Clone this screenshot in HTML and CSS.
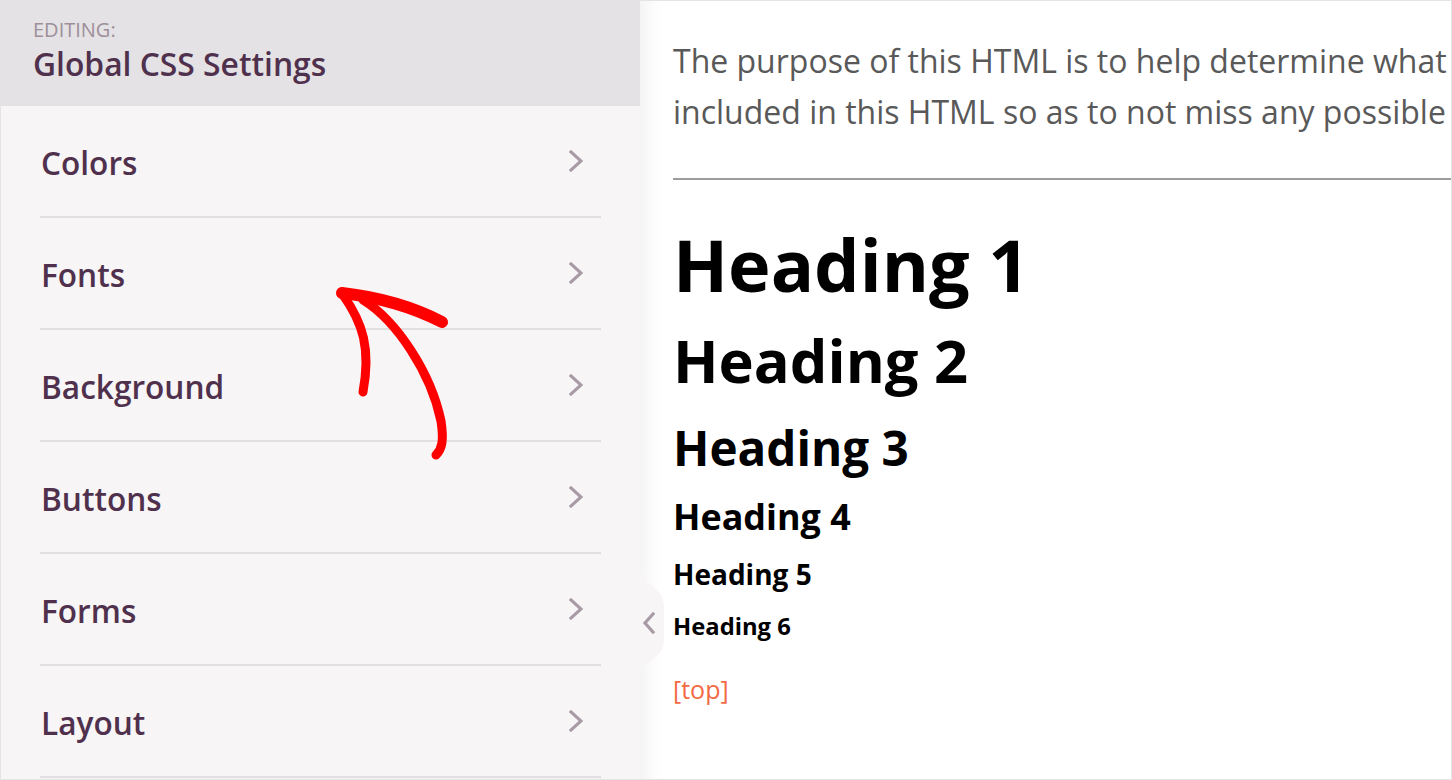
FILE: index.html
```html
<!DOCTYPE html>
<html>
<head>
<meta charset="utf-8">
<link rel="stylesheet" href="styles.css">
</head>
<body>
<div class="frame">
  <aside class="sidebar">
    <div class="sb-head">
      <div class="sb-label">EDITING:</div>
      <div class="sb-title">Global CSS Settings</div>
    </div>
    <ul class="menu">
      <li class="menu-item"><span>Colors</span><svg class="chev" viewBox="0 0 14 22"><polyline points="2,2 12,11 2,20"/></svg></li>
      <li class="menu-item"><span>Fonts</span><svg class="chev" viewBox="0 0 14 22"><polyline points="2,2 12,11 2,20"/></svg></li>
      <li class="menu-item"><span>Background</span><svg class="chev" viewBox="0 0 14 22"><polyline points="2,2 12,11 2,20"/></svg></li>
      <li class="menu-item"><span>Buttons</span><svg class="chev" viewBox="0 0 14 22"><polyline points="2,2 12,11 2,20"/></svg></li>
      <li class="menu-item"><span>Forms</span><svg class="chev" viewBox="0 0 14 22"><polyline points="2,2 12,11 2,20"/></svg></li>
      <li class="menu-item"><span>Layout</span><svg class="chev" viewBox="0 0 14 22"><polyline points="2,2 12,11 2,20"/></svg></li>
    </ul>
    <svg class="tab" viewBox="0 0 26 112">
      <path class="tab-bg" d="M0 0 C0 20 24 18 24 40 L24 72 C24 94 0 92 0 112 Z"/>
      <polyline class="tab-chev" points="13,47 5,56 13,65"/>
    </svg>
    <svg class="scribble" viewBox="0 0 640 780">
      <path class="s-thin" d="M342 294 C362 322 370 348 362 391"/>
      <path class="s-thick" d="M341 292 C376 296 410 305 441 321"/>
      <path class="s-thin" d="M362 299 C396 320 430 372 440 420 C443 440 441 448 435 454"/>
    </svg>
  </aside>
  <main class="content">
    <p class="intro">The purpose of this HTML is to help determine what default settings are with CSS<br>included in this HTML so as to not miss any possible Elements when designing a site.</p>
    <hr class="rule">
    <h1 class="h h1">Heading 1</h1>
    <h2 class="h h2">Heading 2</h2>
    <h3 class="h h3">Heading 3</h3>
    <h4 class="h h4">Heading 4</h4>
    <h5 class="h h5">Heading 5</h5>
    <h6 class="h h6">Heading 6</h6>
    <a class="toplink" href="#">[top]</a>
  </main>
</div>
</body>
</html>
```

FILE: styles.css
```css
* { box-sizing: border-box; }
html, body { margin: 0; padding: 0; }
body {
  width: 1452px;
  height: 780px;
  overflow: hidden;
  font-family: "Open Sans", "Noto Sans", sans-serif;
  background: #ffffff;
}
.frame {
  width: 1452px;
  height: 780px;
  display: flex;
  border: 1px solid #e4e4e4;
  overflow: hidden;
}
.sidebar {
  position: relative;
  width: 639px;
  flex: none;
  background: #f7f5f6;
  z-index: 2;
}
.sb-head {
  height: 105px;
  background: #e4e2e5;
  padding: 16px 0 0 32px;
}
.sb-label {
  font-size: 20px;
  line-height: 26px;
  color: #9e8f9a;
}
.sb-title {
  font-size: 31.8px;
  font-weight: 600;
  line-height: 42px;
  color: #50314d;
}
.menu {
  list-style: none;
  margin: 0;
  padding: 0 39px;
}
.menu-item {
  height: 112px;
  display: flex;
  align-items: center;
  justify-content: space-between;
  border-bottom: 2px solid #e2dee1;
  padding: 0 18px 0 1px;
  font-size: 31.6px;
  font-weight: 600;
  color: #50314d;
}
.menu-item span { position: relative; top: 1px; }
.chev {
  width: 14px;
  height: 22px;
}
.chev polyline, .tab-chev {
  fill: none;
  stroke: #a89ba6;
  stroke-width: 3.2;
  stroke-linecap: square;
}
.tab {
  position: absolute;
  left: 639px;
  top: 566px;
  width: 26px;
  height: 112px;
}
.tab-bg { fill: #f7f5f6; }
.scribble {
  position: absolute;
  left: 0;
  top: 0;
  width: 640px;
  height: 780px;
  pointer-events: none;
}
.scribble path {
  fill: none;
  stroke: #ff0000;
  stroke-linecap: round;
  stroke-linejoin: round;
}
.s-thin { stroke-width: 9; }
.s-thick { stroke-width: 12; }
.content {
  flex: 1;
  min-width: 0;
  overflow: hidden;
  padding: 34px 0 0 33px;
  background: #ffffff;
  box-shadow: inset 22px 0 22px -18px rgba(0, 0, 0, 0.07);
}
.intro {
  margin: 0;
  white-space: nowrap;
  font-size: 32px;
  line-height: 51px;
  color: #595959;
}
.rule {
  margin: 41px 0 0 0;
  border: 0;
  height: 2px;
  background: #9c9c9c;
}
.h {
  margin: 0;
  font-weight: 700;
  line-height: 1.2;
  color: #000000;
}
.h1 { font-size: 72px; margin-top: 41px; }
.h2 { font-size: 59.6px; margin-top: 16.8px; }
.h3 { font-size: 47.6px; margin-top: 23.4px; }
.h4 { font-size: 35.9px; margin-top: 18.4px; }
.h5 { font-size: 28px; margin-top: 20.7px; }
.h6 { font-size: 23.8px; margin-top: 19.6px; }
.toplink {
  display: block;
  margin-top: 34px;
  font-size: 25px;
  line-height: 30px;
  color: #f26a44;
  text-decoration: none;
}
```
